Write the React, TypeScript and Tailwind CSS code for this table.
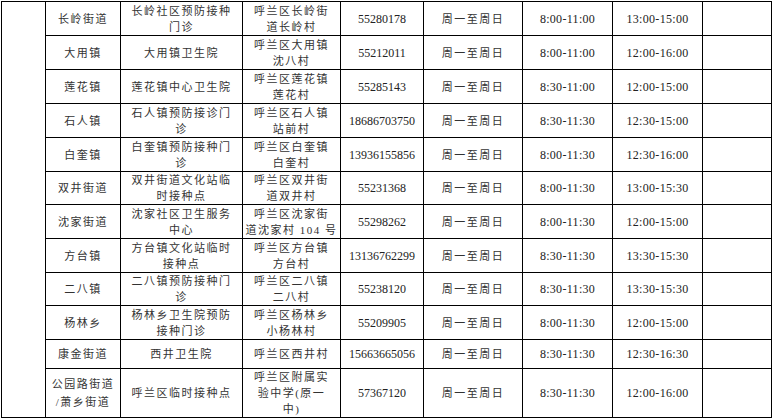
import React from 'react';

interface Row {
  town: string[];
  site: string[];
  addr: string[];
  tel: string;
  am: string;
  pm: string;
  h: string;
  townLeading?: string;
}

const rows: Row[] = [
  { town: ['长岭街道'], site: ['长岭社区预防接种', '门诊'], addr: ['呼兰区长岭街', '道长岭村'], tel: '55280178', am: '8:00-11:00', pm: '13:00-15:00', h: 'h-[34px]' },
  { town: ['大用镇'], site: ['大用镇卫生院'], addr: ['呼兰区大用镇', '沈八村'], tel: '55212011', am: '8:00-11:00', pm: '12:00-16:00', h: 'h-[34px]' },
  { town: ['莲花镇'], site: ['莲花镇中心卫生院'], addr: ['呼兰区莲花镇', '莲花村'], tel: '55285143', am: '8:30-11:00', pm: '12:00-15:00', h: 'h-[34px]' },
  { town: ['石人镇'], site: ['石人镇预防接诊门', '诊'], addr: ['呼兰区石人镇', '站前村'], tel: '18686703750', am: '8:30-11:30', pm: '12:30-15:00', h: 'h-[34px]' },
  { town: ['白奎镇'], site: ['白奎镇预防接种门', '诊'], addr: ['呼兰区白奎镇', '白奎村'], tel: '13936155856', am: '8:00-11:30', pm: '12:30-16:00', h: 'h-[34px]' },
  { town: ['双井街道'], site: ['双井街道文化站临', '时接种点'], addr: ['呼兰区双井街', '道双井村'], tel: '55231368', am: '8:00-11:30', pm: '13:00-15:30', h: 'h-[33px]' },
  { town: ['沈家街道'], site: ['沈家社区卫生服务', '中心'], addr: ['呼兰区沈家街', '道沈家村 104 号'], tel: '55298262', am: '8:00-11:30', pm: '12:00-15:00', h: 'h-[34px]' },
  { town: ['方台镇'], site: ['方台镇文化站临时', '接种点'], addr: ['呼兰区方台镇', '方台村'], tel: '13136762299', am: '8:30-11:30', pm: '13:30-15:30', h: 'h-[34px]' },
  { town: ['二八镇'], site: ['二八镇预防接种门', '诊'], addr: ['呼兰区二八镇', '二八村'], tel: '55238120', am: '8:30-11:30', pm: '13:30-15:30', h: 'h-[33px]' },
  { town: ['杨林乡'], site: ['杨林乡卫生院预防', '接种门诊'], addr: ['呼兰区杨林乡', '小杨林村'], tel: '55209905', am: '8:00-11:30', pm: '12:00-15:00', h: 'h-[34px]' },
  { town: ['康金街道'], site: ['西井卫生院'], addr: ['呼兰区西井村'], tel: '15663665056', am: '8:30-11:30', pm: '12:30-16:30', h: 'h-[29px]' },
  { town: ['公园路街道', '/萧乡街道'], site: ['呼兰区临时接种点'], addr: ['呼兰区附属实', '验中学(原一', '中)'], tel: '57367120', am: '8:30-11:30', pm: '12:00-16:00', h: 'h-[48px]', townLeading: 'leading-[18px]' },
];

const Lines = ({ lines }: { lines: string[] }) => (
  <>
    {lines.map((l, i) => (
      <div key={i}>{l}</div>
    ))}
  </>
);

const cjk = 'border border-black p-0 text-center align-middle text-[11px] tracking-[1.5px] leading-[16px]';
const num = 'border border-black p-0 text-center align-middle text-[12px] leading-[16px]';

export default function App() {
  return (
    <div className="w-[772px] h-[420px] bg-white overflow-hidden pt-[1px] pl-[1px] font-['Liberation_Serif','Noto_Sans_CJK_SC',serif] text-[#333]">
      <table className="border-collapse table-fixed w-[770px]">
        <colgroup>
          <col className="w-[44px]" />
          <col className="w-[75px]" />
          <col className="w-[122px]" />
          <col className="w-[98px]" />
          <col className="w-[83px]" />
          <col className="w-[99px]" />
          <col className="w-[90px]" />
          <col className="w-[90px]" />
          <col className="w-[69px]" />
        </colgroup>
        <tbody>
          {rows.map((r, i) => (
            <tr key={i} className={r.h}>
              {i === 0 && <td rowSpan={rows.length} className="border border-black p-0" />}
              <td className={`${cjk} ${r.townLeading ?? ''}`}>
                <Lines lines={r.town} />
              </td>
              <td className={cjk}>
                <Lines lines={r.site} />
              </td>
              <td className={cjk}>
                <Lines lines={r.addr} />
              </td>
              <td className={`${num} text-[#222]`}>{r.tel}</td>
              <td className={cjk}>周一至周日</td>
              <td className={`${num} tracking-[0.3px] text-[#222]`}>{r.am}</td>
              <td className={`${num} tracking-[0.3px] text-[#222]`}>{r.pm}</td>
              <td className="border border-black p-0" />
            </tr>
          ))}
        </tbody>
      </table>
    </div>
  );
}
